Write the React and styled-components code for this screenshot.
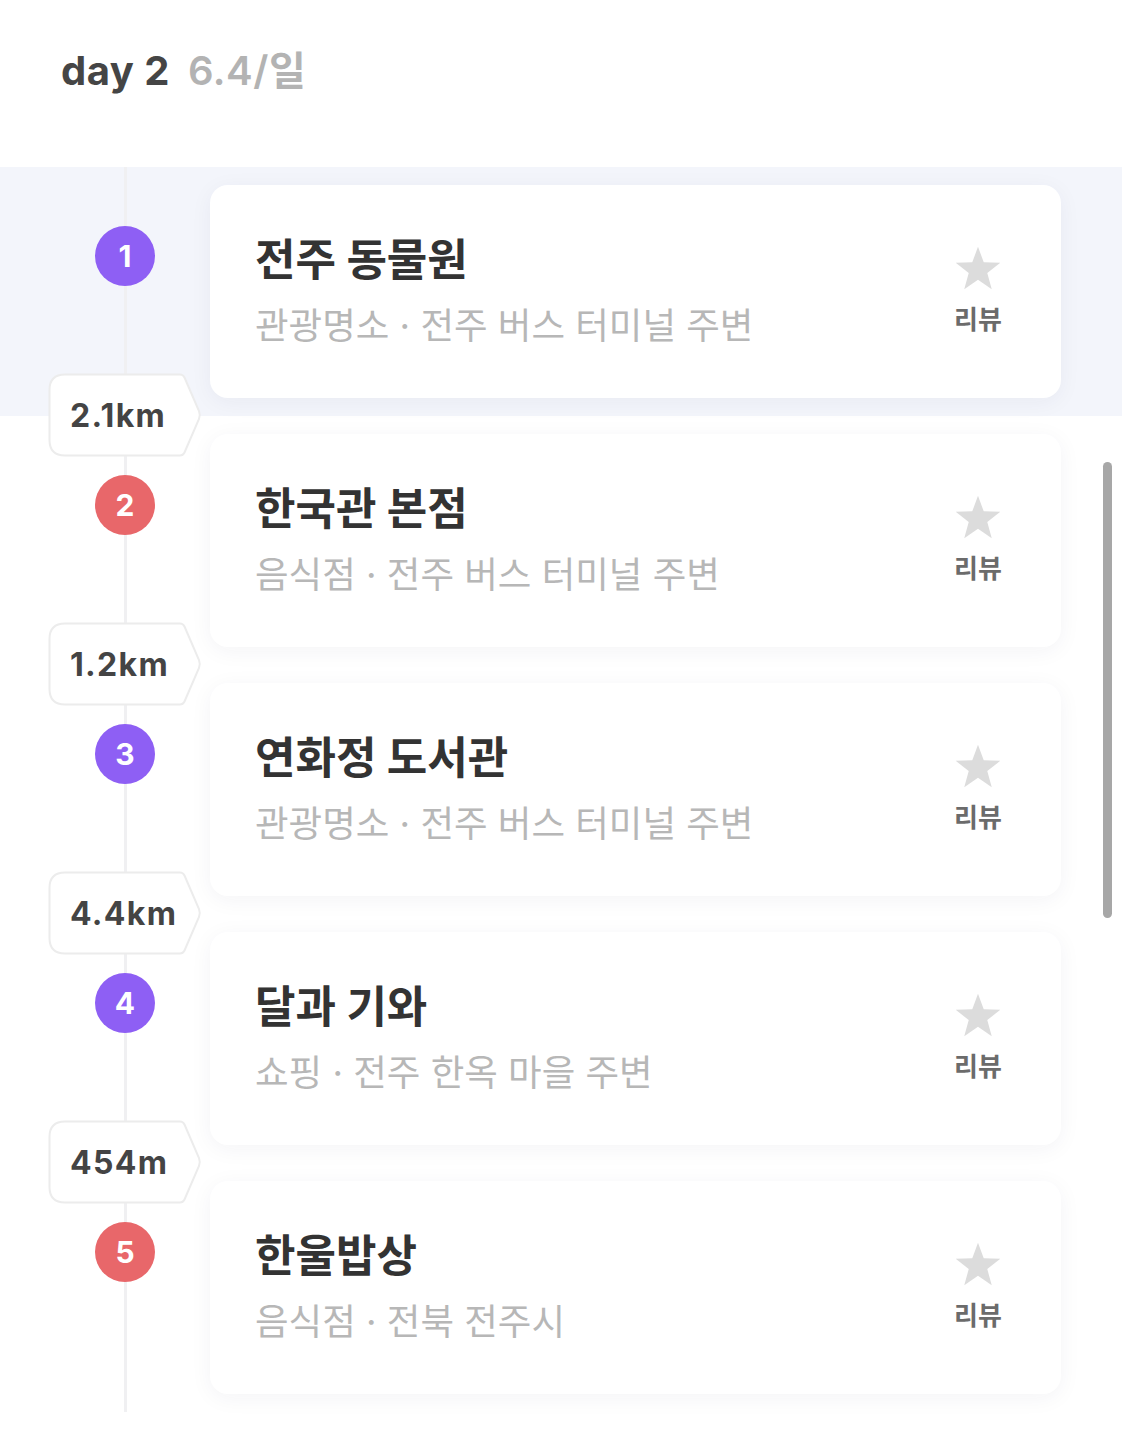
import React from "react";
import styled, { createGlobalStyle } from "styled-components";

const GlobalStyle = createGlobalStyle`
  html, body {
    margin: 0;
    padding: 0;
    background: #ffffff;
  }
  body {
    font-family: "Inter", "Noto Sans CJK KR", "Noto Sans", sans-serif;
    color: #444;
  }
`;

const places = [
  { name: "전주 동물원", category: "관광명소", area: "전주 버스 터미널 주변", color: "purple", dist: "2.1km" },
  { name: "한국관 본점", category: "음식점", area: "전주 버스 터미널 주변", color: "red", dist: "1.2km" },
  { name: "연화정 도서관", category: "관광명소", area: "전주 버스 터미널 주변", color: "purple", dist: "4.4km" },
  { name: "달과 기와", category: "쇼핑", area: "전주 한옥 마을 주변", color: "purple", dist: "454m" },
  { name: "한울밥상", category: "음식점", area: "전북 전주시", color: "red" }
];

const pinColors = {
  purple: "#8e5ff4",
  red: "#e8676a"
};

const StarIcon = () => (
  <svg width="50" height="48" viewBox="0 0 24 23">
    <path
      d="M12 0.8 L14.75 8.3 L22.7 8.55 L16.45 13.45 L18.6 21.2 L12 16.7 L5.4 21.2 L7.55 13.45 L1.3 8.55 L9.25 8.3 Z"
      fill="#dcdcdc"
    />
  </svg>
);

const TagShape = () => (
  <TagSvg viewBox="0 0 154 84" preserveAspectRatio="none">
    <path
      d="M17 1.5 H132 Q135 1.5 136.5 4.5 L151 38 Q152.5 42 151 46 L136.5 79.5 Q135 82.5 132 82.5 H17 Q1.5 82.5 1.5 67 V17 Q1.5 1.5 17 1.5 Z"
      fill="#ffffff"
      stroke="#ececec"
      strokeWidth="2"
    />
  </TagSvg>
);

export default function App() {
  return (
    <Page>
      <GlobalStyle />
      <Header>
        <DayLabel>day 2</DayLabel>
        <DateLabel>6.4/일</DateLabel>
      </Header>
      <List>
        {places.map((p, i) => (
          <Row key={p.name} active={i === 0}>
            <Timeline>
              <Pin color={pinColors[p.color]}>{i + 1}</Pin>
              {p.dist && (
                <DistanceTag>
                  <TagShape />
                  <DistanceText>{p.dist}</DistanceText>
                </DistanceTag>
              )}
            </Timeline>
            <Card>
              <Info>
                <Title>{p.name}</Title>
                <Meta>
                  {p.category} · {p.area}
                </Meta>
              </Info>
              <Review>
                <StarIcon />
                <ReviewText>리뷰</ReviewText>
              </Review>
            </Card>
          </Row>
        ))}
        <Scrollbar />
      </List>
    </Page>
  );
}

const Page = styled.div`
  width: 1122px;
  min-height: 1440px;
  background: #fff;
`;

const Header = styled.div`
  height: 167px;
  box-sizing: border-box;
  padding: 39px 0 0 61px;
  display: flex;
  align-items: baseline;
  gap: 18px;
`;

const DayLabel = styled.span`
  font-size: 40px;
  font-weight: 700;
  color: #454545;
  letter-spacing: 0.5px;
`;

const DateLabel = styled.span`
  font-size: 40px;
  font-weight: 600;
  color: #b3b3b3;
  letter-spacing: 0.5px;
`;

const List = styled.div`
  position: relative;
`;

const Row = styled.div`
  display: grid;
  grid-template-columns: 210px 851px;
  height: 249px;
  box-sizing: border-box;
  padding: 18px 0;
  background: ${props => (props.active ? "#f3f5fb" : "transparent")};
`;

const Timeline = styled.div`
  position: relative;
  margin: -18px 0;
  display: flex;
  align-items: flex-start;
  padding: 59px 0 0 95px;
  box-sizing: border-box;
  background: linear-gradient(#f0f0f2, #f0f0f2) no-repeat 124px 0 / 3px 100%;
`;

const Pin = styled.div`
  width: 60px;
  height: 60px;
  border-radius: 50%;
  background: ${props => props.color};
  color: #fff;
  font-size: 30px;
  font-weight: 700;
  display: flex;
  align-items: center;
  justify-content: center;
  flex-shrink: 0;
  position: relative;
  z-index: 1;
`;

const DistanceTag = styled.div`
  position: absolute;
  left: 48px;
  bottom: -41px;
  width: 154px;
  height: 84px;
  z-index: 2;
  display: flex;
  align-items: center;
  padding-left: 22px;
  box-sizing: border-box;
`;

const TagSvg = styled.svg`
  position: absolute;
  inset: 0;
  width: 100%;
  height: 100%;
`;

const DistanceText = styled.span`
  position: relative;
  font-size: 32px;
  font-weight: 700;
  color: #444;
  letter-spacing: 1.3px;
`;

const Card = styled.div`
  background: #fff;
  border-radius: 18px;
  box-shadow: 0 4px 22px rgba(30, 40, 80, 0.05);
  display: flex;
  align-items: center;
  justify-content: space-between;
  padding: 0 58px 0 45px;
  box-sizing: border-box;
`;

const Info = styled.div`
  display: flex;
  flex-direction: column;
  gap: 15px;
  margin-top: -3px;
`;

const Title = styled.div`
  font-size: 44px;
  font-weight: 700;
  color: #333;
  line-height: 56px;
`;

const Meta = styled.div`
  font-size: 36.5px;
  font-weight: 400;
  color: #b7b7b7;
  line-height: 46px;
`;

const Review = styled.div`
  display: flex;
  flex-direction: column;
  align-items: center;
  gap: 12px;
  margin-top: -4px;
`;

const ReviewText = styled.span`
  font-size: 26px;
  font-weight: 700;
  color: #6b6b6b;
  line-height: 30px;
`;

const Scrollbar = styled.div`
  position: absolute;
  right: 10px;
  top: 295px;
  width: 9px;
  height: 456px;
  border-radius: 5px;
  background: #a7a7a7;
`;
